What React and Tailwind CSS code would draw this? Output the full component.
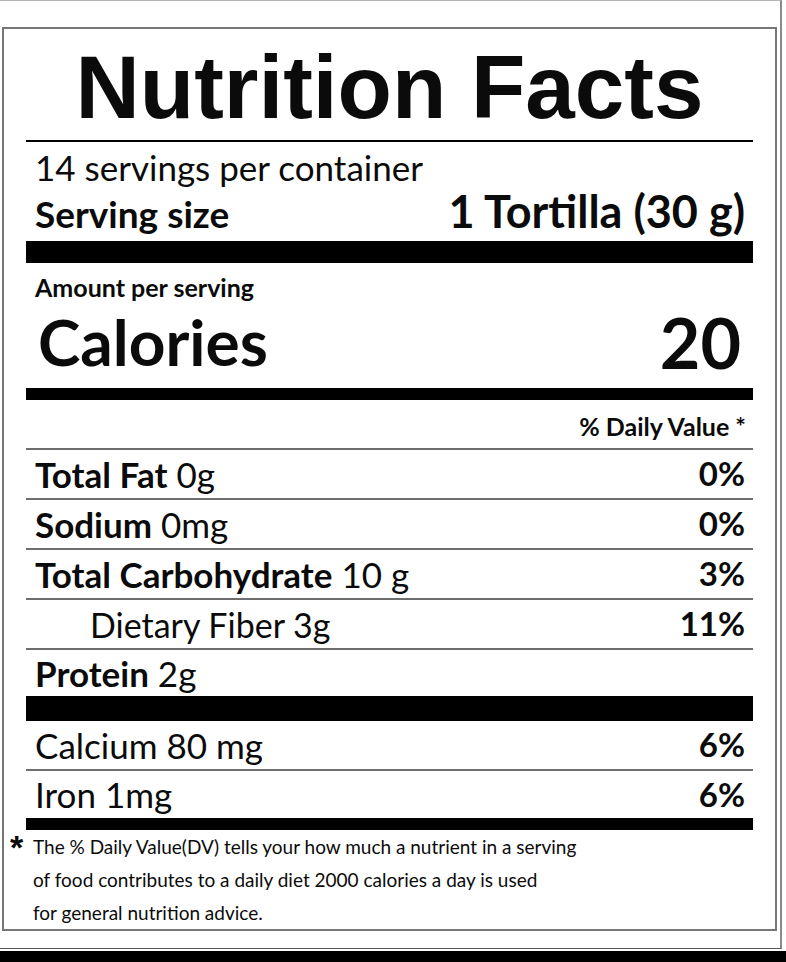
const rows = [
  { label: 'Total Fat', amount: '0g', dv: '0%' },
  { label: 'Sodium', amount: '0mg', dv: '0%' },
  { label: 'Total Carbohydrate', amount: '10 g', dv: '3%' },
  { sub: 'Dietary Fiber 3g', dv: '11%' },
];

function Line() {
  return <div className="h-[2px] bg-[#6e6e6e]"></div>;
}

function Bar({ h }) {
  return <div className={`bg-black ${h}`}></div>;
}

export default function App() {
  return (
    <div className="w-[786px] h-[962px] bg-white overflow-hidden text-[#0b0b0b] font-['Lato',sans-serif]">
      <div className="w-[782px] h-[949px] border-t border-t-[#b5b5b5] border-r-2 border-r-[#8a8a8a] border-b border-b-[#555] pt-[26px] pl-[2px]">
        <div className="w-[775px] h-[904px] border-2 border-[#777] px-[22px] flex flex-col">
          {/* Heading */}
          <div className="h-[111px] pt-[14px] text-center">
            <h1 className="text-[89px] leading-[88px] font-bold font-['Liberation_Sans',Arial,sans-serif]">
              Nutrition Facts
            </h1>
          </div>
          <div className="h-[2px] bg-black"></div>

          {/* Servings */}
          <div className="h-[99px] pt-[4px] pl-[9px] pr-[8px]">
            <div className="h-[42px] leading-[42px] text-[35px]">14 servings per container</div>
            <div className="h-[46px] leading-[46px] flex items-baseline justify-between font-bold">
              <span className="text-[37px]">Serving size</span>
              <span className="text-[45px]">1 Tortilla (30 g)</span>
            </div>
          </div>
          <Bar h="h-[22px]" />

          {/* Calories */}
          <div className="h-[43px] pt-[5px] pl-[9px] text-[25px] leading-[38px] font-bold">Amount per serving</div>
          <div className="h-[82px] pb-[10px] pl-[12px] pr-[12px] flex items-center justify-between font-bold">
            <span className="text-[64px] leading-[64px]">Calories</span>
            <span className="text-[70px] leading-[70px]">20</span>
          </div>
          <Bar h="h-[12px]" />

          <div className="h-[48px] pt-[6px] pr-[7px] flex items-center justify-end text-[25px] font-bold">
            % Daily Value *
          </div>
          <Line />

          {rows.map((r, i) => (
            <div key={i}>
              <div className="h-[48px] pl-[9px] pr-[8px] flex items-center justify-between text-[35px]">
                {r.sub ? (
                  <span className="pl-[55px] text-[34px]">{r.sub}</span>
                ) : (
                  <span>
                    <b className="font-bold">{r.label}</b> {r.amount}
                  </span>
                )}
                <span className="font-bold text-[33px]">{r.dv}</span>
              </div>
              <Line />
            </div>
          ))}

          <div className="h-[46px] pl-[9px] flex items-center text-[35px]">
            <span>
              <b className="font-bold">Protein</b> 2g
            </span>
          </div>
          <Bar h="h-[25px]" />

          <div className="h-[48px] pl-[9px] pr-[8px] flex items-center justify-between text-[35px]">
            <span>Calcium 80 mg</span>
            <span className="font-bold text-[33px]">6%</span>
          </div>
          <Line />
          <div className="h-[47px] pl-[9px] pr-[8px] flex items-center justify-between text-[35px]">
            <span>Iron 1mg</span>
            <span className="font-bold text-[33px]">6%</span>
          </div>
          <Bar h="h-[12px]" />

          {/* Footnote */}
          <div className="flex -ml-[16px]">
            <span className="w-[23px] pt-[2px] text-[34px] leading-[30px] font-bold font-['Liberation_Sans',Arial,sans-serif]">*</span>
            <div className="text-[19px] leading-[33px]">
              <p>The % Daily Value(DV) tells your how much a nutrient in a serving</p>
              <p>of food contributes to a daily diet 2000 calories a day is used</p>
              <p>for general nutrition advice.</p>
            </div>
          </div>
        </div>
      </div>
      <div className="mt-[2px] h-[11px] bg-black"></div>
    </div>
  );
}
